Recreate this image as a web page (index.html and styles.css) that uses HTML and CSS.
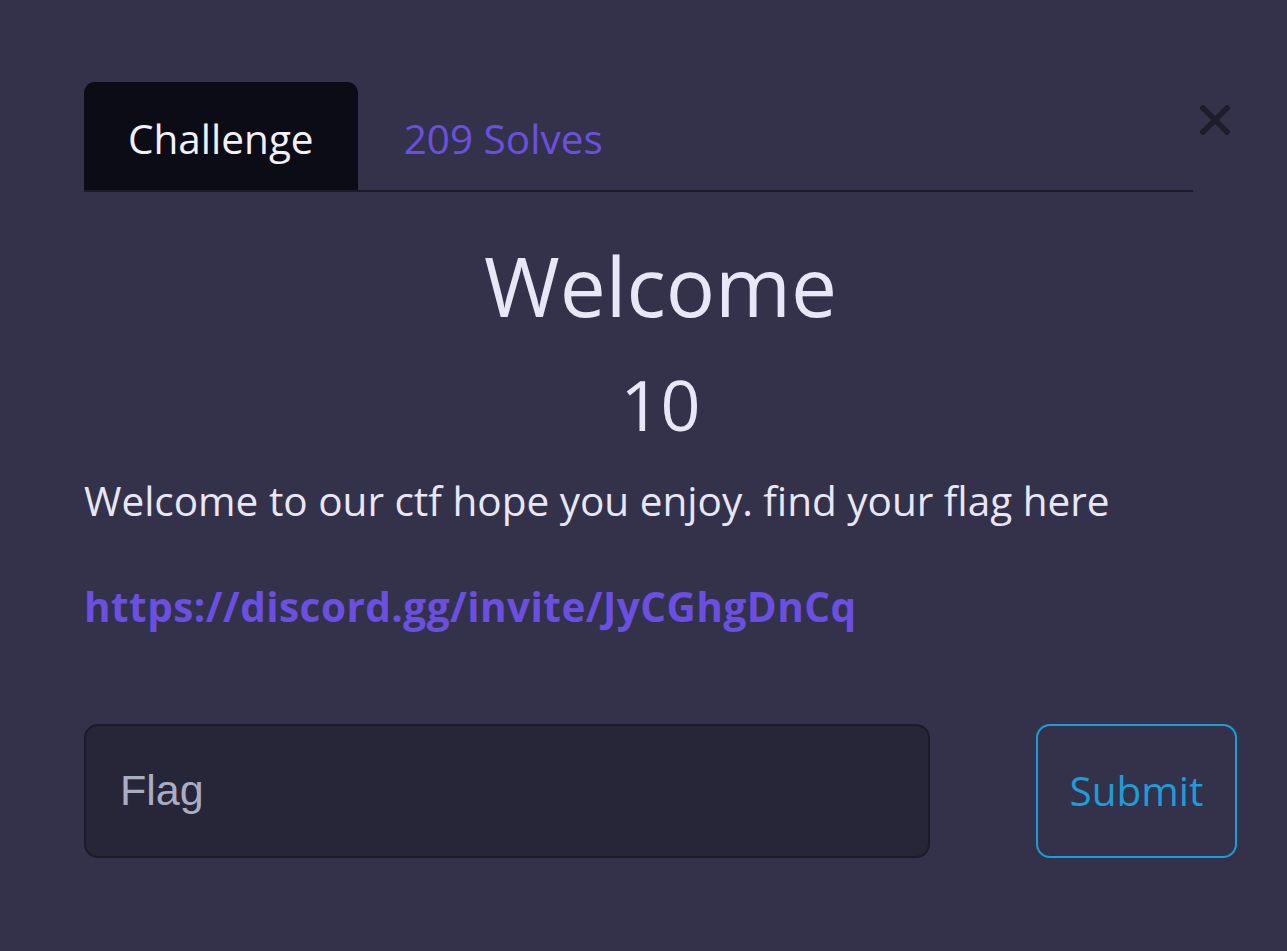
FILE: index.html
```html
<!DOCTYPE html>
<html lang="en">
<head>
<meta charset="utf-8">
<title>Welcome</title>
<link rel="stylesheet" href="styles.css">
</head>
<body>
<div class="modal">
  <div class="header">
    <ul class="tabs">
      <li class="tab active">Challenge</li>
      <li class="tab">209 Solves</li>
    </ul>
    <button class="close" aria-label="Close">
      <svg width="30" height="30" viewBox="0 0 30 30"><path d="M3 3 L27 27 M27 3 L3 27" stroke="#1d1c2b" stroke-width="5.5" stroke-linecap="square"/></svg>
    </button>
  </div>
  <h2 class="name">Welcome</h2>
  <h3 class="value">10</h3>
  <p class="desc">Welcome to our ctf hope you enjoy. find your flag here</p>
  <p class="desc"><a class="link" href="#">https://discord.gg/invite/JyCGhgDnCq</a></p>
  <div class="form">
    <input class="flag" type="text" placeholder="Flag">
    <button class="submit">Submit</button>
  </div>
</div>
</body>
</html>
```
FILE: styles.css
```css
html, body {
  margin: 0;
  padding: 0;
}
body {
  background: #33324a;
  color: #e8e6f7;
  font-family: "Open Sans", "Noto Sans", sans-serif;
  font-size: 40.5px;
  width: 1287px;
  height: 951px;
  overflow: hidden;
}
.modal {
  padding: 82px 50px 0 84px;
}
.header {
  display: flex;
  align-items: flex-start;
}
.tabs {
  list-style: none;
  margin: 0;
  padding: 0;
  display: flex;
  width: 1109px;
  border-bottom: 2px solid #1c1b29;
}
.tab {
  padding: 5px 44px 0 44px;
  height: 103px;
  line-height: 103px;
  color: #6b4fe0;
  border-radius: 11px 11px 0 0;
  margin-right: 2px;
}
.tab.active {
  background: #0c0c16;
  color: #f2f1fb;
}
.close {
  background: none;
  border: 0;
  padding: 0;
  margin: 23px 0 0 7px;
  width: 30px;
  height: 30px;
  display: flex;
}
.name {
  text-align: center;
  font-weight: 400;
  font-size: 82px;
  line-height: 1.2;
  margin: 44px 0 28px 0;
}
.value {
  text-align: center;
  font-weight: 400;
  font-size: 70px;
  line-height: 1.2;
  margin: 0 0 25px 0;
}
.desc {
  margin: 6px 0 45px 0;
  line-height: 1.5;
}
.link {
  color: #6b4fe0;
  font-weight: 700;
  letter-spacing: 0.45px;
  text-decoration: none;
}
.form {
  display: flex;
  justify-content: space-between;
  margin-top: 86px;
}
.flag {
  box-sizing: border-box;
  width: 846px;
  height: 134px;
  background: #272639;
  border: 2px solid #1c1b29;
  border-radius: 14px;
  padding: 0 34px;
  font-family: "Liberation Sans", Arial, sans-serif;
  font-size: 43px;
  color: #e8e6f7;
  outline: none;
}
.flag::placeholder {
  color: #a9adc4;
}
.submit {
  box-sizing: border-box;
  width: 201px;
  height: 134px;
  background: transparent;
  border: 2px solid #1f9bd7;
  border-radius: 14px;
  color: #1f9bd7;
  font-family: "Open Sans", "Noto Sans", sans-serif;
  font-size: 40.5px;
  padding: 0;
}
```
